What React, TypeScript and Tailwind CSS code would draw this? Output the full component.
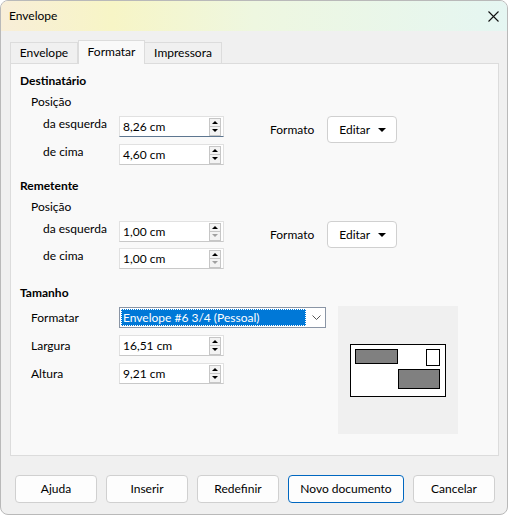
const font = { fontFamily: 'Lato, "Noto Sans", sans-serif' };

function Spin({ value, focused, dimDown }: { value: string; focused?: boolean; dimDown?: boolean }) {
  return (
    <div
      className={`flex h-[21px] w-[105px] items-center border border-[#e1e1e1] bg-white pl-[3px] pr-[2px] ${
        focused ? "border-b-[#5d7690]" : "border-b-[#c8c8c8]"
      }`}
    >
      <span className="flex-1 text-[12px] leading-none text-black">{value}</span>
      <div className="flex flex-col">
        <div className="flex h-[9px] w-[12px] items-center justify-center border border-[#c6c6c6] bg-[#f3f3f3]">
          <div className="h-0 w-0 border-x-[3px] border-b-[3px] border-x-transparent border-b-black" />
        </div>
        <div className="flex h-[9px] w-[12px] items-center justify-center border border-t-0 border-[#c6c6c6] bg-[#f3f3f3]">
          <div
            className={`h-0 w-0 border-x-[3px] border-t-[3px] border-x-transparent ${
              dimDown ? "border-t-[#a0a0a0]" : "border-t-black"
            }`}
          />
        </div>
      </div>
    </div>
  );
}

function EditBtn() {
  return (
    <div className="flex h-[27px] w-[70px] items-center rounded-[4px] border border-[#d0d0d0] bg-white pl-[11px] text-[12px]">
      <span className="flex-1">Editar</span>
      <div className="mr-[10px] h-0 w-0 border-x-[4px] border-t-[4px] border-x-transparent border-t-black" />
    </div>
  );
}

function PosSection({
  title,
  rows,
  dimDown,
  rowGap,
  firstFocused,
}: {
  title: string;
  rows: [string, string][];
  dimDown?: boolean;
  rowGap: string;
  firstFocused?: boolean;
}) {
  return (
    <div>
      <div className="h-[16px] pl-[9px] text-[12px] font-bold leading-[16px]">{title}</div>
      <div className="mt-[5px] h-[16px] pl-[20px] text-[12px] leading-[16px]">Posição</div>
      <div className="flex">
        <div className={`mt-[6px] flex flex-col ${rowGap}`}>
          {rows.map(([label, value], i) => (
            <div key={label} className="flex items-start">
              <div className="w-[108px] pl-[32px] text-[12px] leading-[16px]">{label}</div>
              <Spin value={value} focused={firstFocused && i === 0} dimDown={dimDown} />
            </div>
          ))}
        </div>
        <div className="ml-[46px] mt-[6px] flex h-[27px] items-center gap-[13px]">
          <span className="text-[12px]">Formato</span>
          <EditBtn />
        </div>
      </div>
    </div>
  );
}

function Preview() {
  return (
    <div className="flex h-[128px] w-[120px] items-center justify-center bg-[#f0f0f0]">
      <div className="flex h-[53px] w-[96px] flex-col border border-black bg-white px-[4px] pt-[4px]">
        <div className="flex items-start justify-between">
          <div className="h-[15px] w-[43px] border border-black bg-[#808080]" />
          <div className="mr-[1px] h-[17px] w-[14px] border border-black bg-white" />
        </div>
        <div className="mt-[3px] flex justify-end">
          <div className="mr-[1px] h-[20px] w-[42px] border border-black bg-[#808080]" />
        </div>
      </div>
    </div>
  );
}

export default function App() {
  const buttons = [
    { label: "Ajuda", w: "w-[82px]" },
    { label: "Inserir", w: "w-[82px]" },
    { label: "Redefinir", w: "w-[82px]" },
    { label: "Novo documento", w: "w-[116px]", primary: true },
    { label: "Cancelar", w: "w-[82px]" },
  ];
  return (
    <div className="h-[517px] w-[510px] bg-white" style={font}>
      <div className="flex h-[515px] w-[508px] flex-col overflow-hidden rounded-[8px] border border-[#b9b9b9] bg-[#f0f0f0] text-black">
        <div className="flex h-[30px] items-center justify-between bg-[linear-gradient(90deg,#f8eed8_0%,#f7f5c6_22%,#eef7e0_50%,#e5f6f2_100%)] pl-[8px] pr-[8px]">
          <span className="text-[12px]">Envelope</span>
          <svg width="11" height="11" viewBox="0 0 11 11">
            <path d="M0.5 0.5 L10.5 10.5 M10.5 0.5 L0.5 10.5" stroke="#111" strokeWidth="1.1" />
          </svg>
        </div>

        <div className="mt-[8px] flex items-end pl-[9px]">
          <div className="flex h-[21px] w-[68px] items-center justify-center border border-b-0 border-[#dcdcdc] bg-[#f0f0f0] text-[12px]">
            Envelope
          </div>
          <div className="relative top-[1px] z-10 flex h-[24px] w-[67px] items-center justify-center border border-b-0 border-[#dcdcdc] bg-[#f9f9f9] pb-[2px] text-[12px]">
            Formatar
          </div>
          <div className="flex h-[21px] w-[77px] items-center justify-center border border-b-0 border-l-0 border-[#dcdcdc] bg-[#f0f0f0] text-[12px]">
            Impressora
          </div>
        </div>

        <div className="ml-[9px] h-[393px] w-[489px] border border-[#dcdcdc] bg-[#f9f9f9] pt-[9px]">
          <PosSection
            title="Destinatário"
            rows={[
              ["da esquerda", "8,26 cm"],
              ["de cima", "4,60 cm"],
            ]}
            rowGap="gap-[7px]"
            firstFocused
          />
          <div className="mt-[13px]">
            <PosSection
              title="Remetente"
              rows={[
                ["da esquerda", "1,00 cm"],
                ["de cima", "1,00 cm"],
              ]}
              rowGap="gap-[6px]"
              dimDown
            />
          </div>

          <div className="mt-[16px] h-[16px] pl-[9px] text-[12px] font-bold leading-[16px]">Tamanho</div>
          <div className="flex">
            <div>
              <div className="mt-[6px] flex items-center">
                <div className="w-[108px] pl-[20px] text-[12px]">Formatar</div>
                <div className="flex h-[21px] w-[207px] border border-[#8a95a5] bg-white">
                  <div className="m-[1px] flex flex-1 items-center border border-dotted border-white bg-[#0078d7] pl-[1px] text-[12px] text-white">
                    Envelope #6 3/4 (Pessoal)
                  </div>
                  <div className="flex w-[18px] items-center justify-center">
                    <svg width="9" height="5" viewBox="0 0 9 5">
                      <path d="M0.5 0.5 L4.5 4.5 L8.5 0.5" fill="none" stroke="#555" strokeWidth="1" />
                    </svg>
                  </div>
                </div>
              </div>
              <div className="mt-[7px] flex flex-col gap-[7px]">
                {[
                  ["Largura", "16,51 cm"],
                  ["Altura", "9,21 cm"],
                ].map(([l, v]) => (
                  <div key={l} className="flex items-center">
                    <div className="w-[108px] pl-[20px] text-[12px]">{l}</div>
                    <Spin value={v} />
                  </div>
                ))}
              </div>
            </div>
            <div className="ml-[12px] mt-[5px]">
              <Preview />
            </div>
          </div>
        </div>

        <div className="mt-[19px] flex gap-[9px] pl-[14px]">
          {buttons.map((b) => (
            <div
              key={b.label}
              className={`flex h-[28px] items-center justify-center rounded-[4px] border bg-[#fdfdfd] text-[12px] ${b.w} ${
                b.primary ? "border-[#0067c0]" : "border-[#d0d0d0]"
              }`}
            >
              {b.label}
            </div>
          ))}
        </div>
      </div>
    </div>
  );
}
